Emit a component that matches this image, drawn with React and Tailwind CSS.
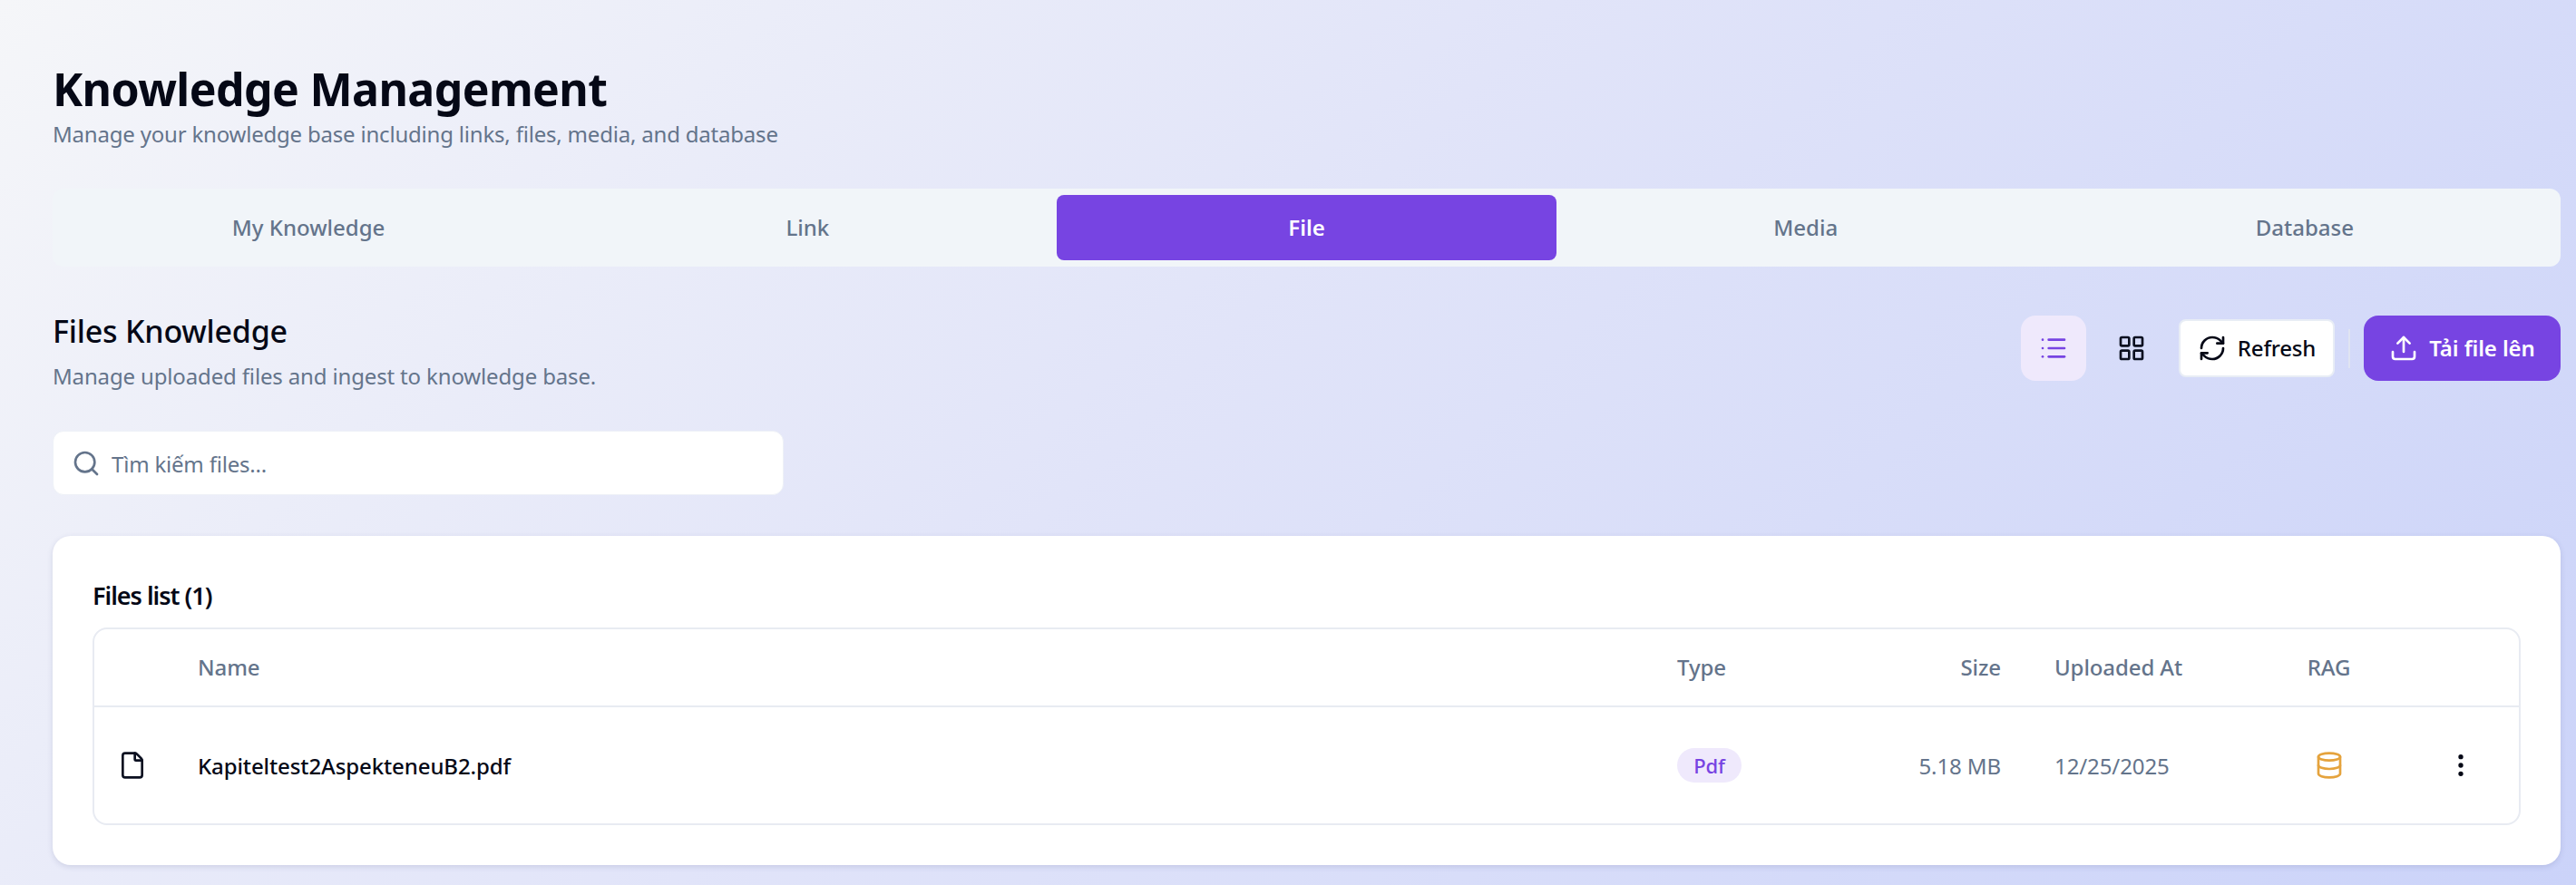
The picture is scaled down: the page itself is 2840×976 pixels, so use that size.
import React from "react";
import { List, LayoutGrid, RefreshCw, Upload, Search, File, Database, MoreVertical } from "lucide-react";

const tabs = ["My Knowledge", "Link", "File", "Media", "Database"];
const cols = "grid grid-cols-[114px_1631px_150px_207px_289px_145px_1fr]";

export default function App() {
  return (
    <div className="h-[976px] w-full overflow-hidden bg-[linear-gradient(135deg,#f5f6f9_0%,#e1e4f9_45%,#cbd3f9_100%)] font-['Noto_Sans','Open_Sans',sans-serif] text-[#020617]">
      <div className="flex flex-col pl-[58px] pr-[17px] pt-[68px]">
        <h1 className="text-[50px] leading-[60px] font-bold tracking-[-0.6px] text-[#050816]">Knowledge Management</h1>
        <p className="text-[24px] leading-[40px] tracking-[-0.2px] text-[#64748b]">Manage your knowledge base including links, files, media, and database</p>

        <div className="mt-[40px] grid h-[86px] grid-cols-5 rounded-xl bg-[#f1f5f9] p-[7px]">
          {tabs.map((t) => (
            <div key={t} className={t === "File" ? "flex items-center justify-center rounded-lg bg-[#7744e2] text-[24px] font-semibold text-white" : "flex items-center justify-center text-[24px] font-medium text-[#64748b]"}>
              {t}
            </div>
          ))}
        </div>

        <div className="mt-[50px] flex items-start justify-between">
          <div className="flex flex-col">
            <h2 className="text-[34px] leading-[42px] font-medium tracking-[-0.2px] text-[#050816]">Files Knowledge</h2>
            <p className="mt-[14px] text-[24px] leading-[30px] tracking-[-0.15px] text-[#64748b]">Manage uploaded files and ingest to knowledge base.</p>
          </div>
          <div className="flex items-center pt-[4px]">
            <button className="flex h-[72px] w-[72px] items-center justify-center rounded-2xl bg-[#efe9fc] text-[#7744e2]"><List size={32} strokeWidth={2} /></button>
            <button className="ml-[14px] flex h-[72px] w-[72px] items-center justify-center rounded-2xl text-[#0b1020]"><LayoutGrid size={32} strokeWidth={2} /></button>
            <button className="ml-[16px] flex h-[64px] w-[172px] items-center justify-center gap-[12px] rounded-lg border-2 border-[#e8edf5] bg-white text-[24px] font-medium tracking-[-0.2px] text-[#050816]"><RefreshCw size={32} strokeWidth={2} />Refresh</button>
            <div className="mx-[15px] h-[43px] w-[2px] bg-[#e0e4f2]" />
            <button className="flex h-[72px] w-[217px] items-center justify-center gap-[12px] rounded-2xl bg-[#7744e2] text-[24px] font-semibold tracking-[-0.1px] text-white"><Upload size={32} strokeWidth={2} />Tải file lên</button>
          </div>
        </div>

        <div className="mt-[45px] flex h-[71px] w-[806px] items-center gap-[12px] rounded-xl border border-[#eef1f7] bg-white pl-[20px] text-[24px] tracking-[-0.2px] text-[#64748b]">
          <Search size={32} strokeWidth={2} />
          <span className="pt-[2px]">Tìm kiếm files...</span>
        </div>

        <div className="mt-[45px] flex h-[363px] flex-col rounded-[20px] bg-white px-[44px] pt-[48px] shadow-[0_2px_6px_rgba(60,70,120,0.15)]">
          <h3 className="text-[27px] leading-[36px] font-semibold tracking-[-1px] text-[#050816]">Files list (1)</h3>
          <div className="mt-[17px] h-[218px] rounded-2xl border-2 border-[#e8ebf2]">
            <div className={cols + " h-[86px] items-center border-b-2 border-[#e8ebf2] text-[24px] font-medium tracking-[-0.1px] text-[#64748b]"}>
              <div />
              <div>Name</div>
              <div>Type</div>
              <div className="text-right">Size</div>
              <div className="pl-[59px]">Uploaded At</div>
              <div className="text-center">RAG</div>
              <div />
            </div>
            <div className={cols + " h-[128px] items-center text-[24px] tracking-[-0.1px]"}>
              <div className="flex pl-[26px] text-[#0b1020]"><File size={32} strokeWidth={2} /></div>
              <div className="pt-[2px] font-medium text-[#050816]">Kapiteltest2AspekteneuB2.pdf</div>
              <div><span className="inline-flex h-[38px] w-[71px] items-center justify-center rounded-full bg-[#efe9fc] text-[22px] font-medium text-[#7744e2]">Pdf</span></div>
              <div className="pt-[2px] text-right text-[#64748b]">5.18 MB</div>
              <div className="pt-[2px] pl-[59px] text-[#64748b]">12/25/2025</div>
              <div className="flex justify-center text-[#e5a33d]"><Database size={32} strokeWidth={2} /></div>
              <div className="flex pl-[57px] text-[#050816]"><MoreVertical size={32} strokeWidth={2} /></div>
            </div>
          </div>
        </div>
      </div>
    </div>
  );
}
